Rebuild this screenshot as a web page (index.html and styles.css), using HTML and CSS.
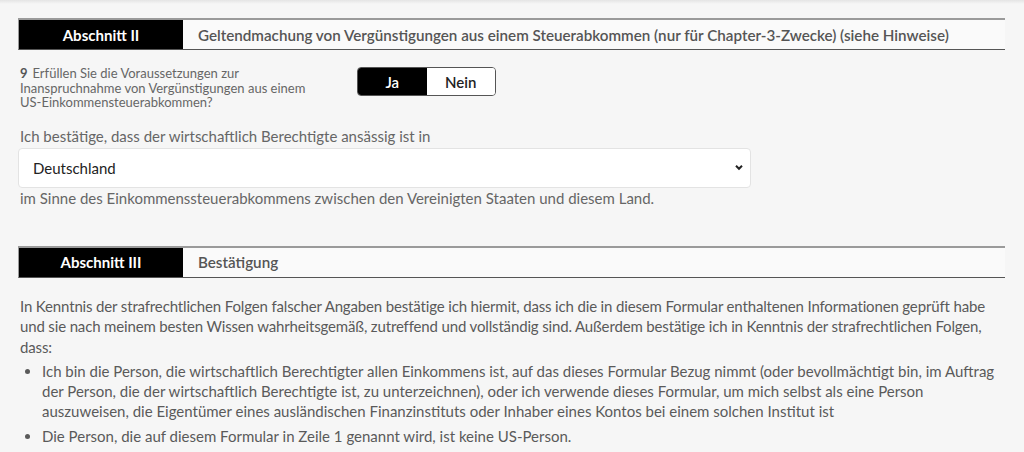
FILE: index.html
```html
<!DOCTYPE html>
<html lang="de">

<head>
    <meta charset="UTF-8">
    <meta name="viewport" content="width=device-width,initial-scale=1.0">
    <title>Formular W-8BEN</title>
    <link rel="stylesheet" href="styles.css">
</head>

<body>
    <div class="topbar"></div>

    <div class="form-page">
        <!-- Abschnitt II -->
        <div class="section-head">
            <div class="section-label">Abschnitt II</div>
            <div class="section-title">Geltendmachung von Vergünstigungen aus einem Steuerabkommen (nur für Chapter-3-Zwecke) (siehe Hinweise)</div>
        </div>

        <div class="question-row">
            <p class="question"><span class="question-no">9</span>Erfüllen Sie die Voraussetzungen zur Inanspruchnahme von Vergünstigungen aus einem US-Einkommensteuerabkommen?</p>
            <div class="toggle">
                <button class="toggle-btn active">Ja</button>
                <button class="toggle-btn">Nein</button>
            </div>
        </div>

        <label class="field-label" for="countrySelect">Ich bestätige, dass der wirtschaftlich Berechtigte ansässig ist in</label>
        <div class="select-box" id="countrySelect">
            <span class="select-value">Deutschland</span>
            <svg class="chevron" width="10" height="7" viewBox="0 0 10 7">
                <path d="M2 1.8 L5 4.8 L8 1.8" fill="none" stroke="#222" stroke-width="2" />
            </svg>
        </div>
        <p class="field-note">im Sinne des Einkommenssteuerabkommens zwischen den Vereinigten Staaten und diesem Land.</p>

        <!-- Abschnitt III -->
        <div class="section-head section-three">
            <div class="section-label">Abschnitt III</div>
            <div class="section-title">Bestätigung</div>
        </div>

        <p class="declaration">In Kenntnis der strafrechtlichen Folgen falscher Angaben bestätige ich hiermit, dass ich die in diesem Formular enthaltenen Informationen geprüft habe und sie nach meinem besten Wissen wahrheitsgemäß, zutreffend und vollständig sind. Außerdem bestätige ich in Kenntnis der strafrechtlichen Folgen, dass:</p>
        <ul class="declaration-list">
            <li>Ich bin die Person, die wirtschaftlich Berechtigter allen Einkommens ist, auf das dieses Formular Bezug nimmt (oder bevollmächtigt bin, im Auftrag der Person, die der wirtschaftlich Berechtigte ist, zu unterzeichnen), oder ich verwende dieses Formular, um mich selbst als eine Person auszuweisen, die Eigentümer eines ausländischen Finanzinstituts oder Inhaber eines Kontos bei einem solchen Institut ist</li>
            <li>Die Person, die auf diesem Formular in Zeile 1 genannt wird, ist keine US-Person.</li>
        </ul>
    </div>
</body>

</html>
```

FILE: styles.css
```css
* {
    margin: 0;
    padding: 0;
    box-sizing: border-box;
}

html,
body {
    font-family: 'Lato', 'Liberation Sans', sans-serif;
    background-color: #f6f6f6;
    color: #5a5a5a;
}

/* Schatten der Kopfleiste oben */
.topbar {
    height: 4px;
    background: linear-gradient(#e4e4e4, #f6f6f6);
}

.form-page {
    padding: 14px 19px 0 18px;
}

/* Abschnittsköpfe */
.section-head {
    display: flex;
    height: 32px;
    border-top: 2px solid #9a9a9a;
    border-bottom: 1px solid #555;
    border-left: 1px solid #9a9a9a;
    background-color: #fafafa;
}

.section-label {
    width: 164px;
    background-color: #000;
    color: #fff;
    font-size: 15px;
    font-weight: 700;
    display: flex;
    align-items: center;
    justify-content: center;
}

.section-title {
    padding-left: 15px;
    display: flex;
    align-items: center;
    font-size: 15.2px;
    font-weight: 600;
    color: #555;
}

/* Frage 9 mit Ja/Nein */
.question-row {
    display: flex;
    align-items: flex-start;
    margin-top: 16px;
}

.question {
    flex: 0 0 339px;
    padding: 0 36px 0 2px;
    font-size: 13px;
    line-height: 14.5px;
    color: #666;
}

.question-no {
    display: inline-block;
    font-weight: 700;
    color: #555;
    margin-right: 5px;
}

.toggle {
    display: flex;
    flex: 0 0 139px;
    height: 29px;
    border: 1px solid #555;
    border-radius: 4px;
    overflow: hidden;
    margin-top: 1px;
}

.toggle-btn {
    flex: 1;
    border: none;
    background-color: #fff;
    color: #222;
    font-family: inherit;
    font-size: 15px;
    font-weight: 600;
}

.toggle-btn.active {
    background-color: #000;
    color: #fff;
}

/* Länderauswahl */
.field-label {
    display: block;
    margin-top: 16px;
    padding-left: 2px;
    font-size: 15px;
    line-height: 20px;
    color: #666;
}

.select-box {
    display: flex;
    align-items: center;
    justify-content: space-between;
    width: 733px;
    height: 40px;
    margin-top: 2px;
    padding: 0 6px 0 14px;
    background-color: #fff;
    border: 1px solid #e3e3e3;
    border-radius: 4px;
}

.select-value {
    font-size: 15px;
    color: #222;
}

.field-note {
    padding-left: 2px;
    font-size: 15px;
    line-height: 20px;
    color: #666;
}

.section-three {
    margin-top: 38px;
}

/* Bestätigungstext */
.declaration {
    margin-top: 18px;
    padding-left: 2px;
    font-size: 15px;
    line-height: 20.5px;
    letter-spacing: -0.15px;
    color: #5a5a5a;
}

.declaration-list {
    margin-top: 4px;
    padding-left: 24px;
    font-size: 15px;
    line-height: 20px;
    color: #5a5a5a;
}

.declaration-list li {
    margin-bottom: 5px;
}
```
